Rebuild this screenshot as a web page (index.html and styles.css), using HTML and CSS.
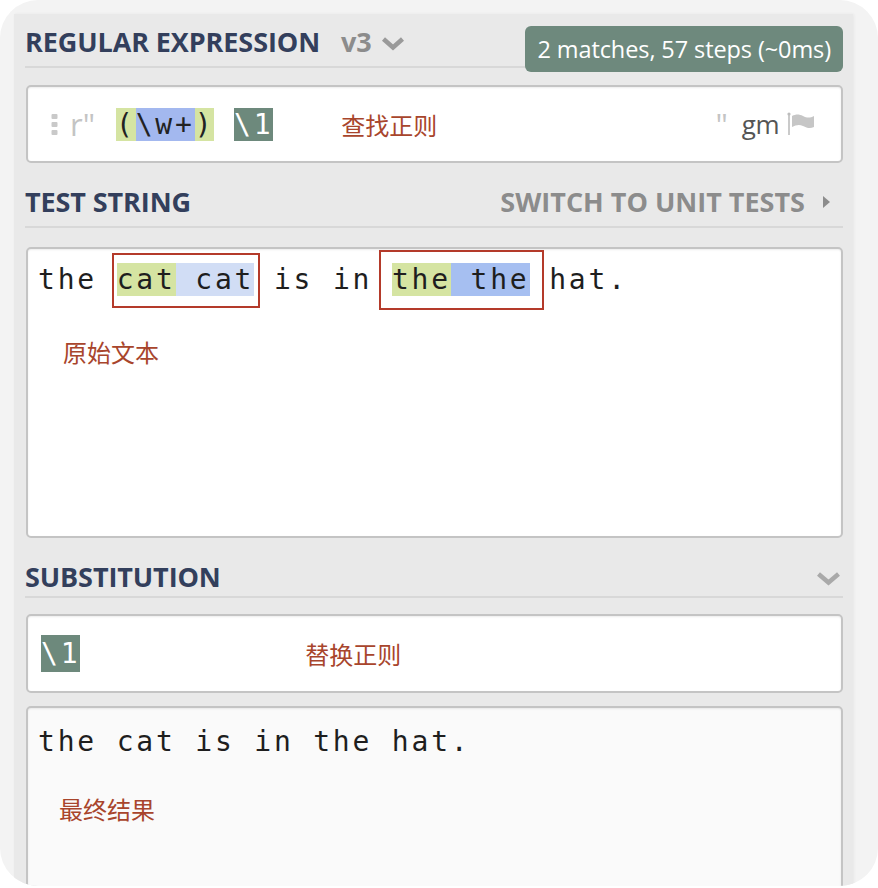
FILE: index.html
```html
<!DOCTYPE html>
<html lang="zh-CN">
<head>
<meta charset="utf-8">
<title>regex101</title>
<link rel="stylesheet" href="styles.css">
</head>
<body>
<div class="frame">
  <div class="panel">
    <div class="sec-head head-regex">
      <div class="title">REGULAR EXPRESSION <span class="flavor">v3</span><svg class="chev chev-flavor" width="24" height="15" viewBox="0 0 24 15"><polyline points="2.5,3 12,11.5 21.5,3" fill="none" stroke="#9a9a9a" stroke-width="4.5"/></svg></div>
      <div class="badge">2 matches, 57 steps (~0ms)</div>
    </div>

    <div class="box regex-box">
      <div class="regex-left">
        <svg class="handle" width="7" height="21" viewBox="0 0 7 21"><rect x="0.5" y="0" width="6" height="5" rx="1" fill="#c9c9c9"/><rect x="0.5" y="8" width="6" height="5" rx="1" fill="#c9c9c9"/><rect x="0.5" y="16" width="6" height="5" rx="1" fill="#c9c9c9"/></svg>
        <span class="delim">r"</span>
        <span class="mono code"><span class="hl-grp">(</span><span class="hl-esc">\w+</span><span class="hl-grp">)</span> <span class="backref">\1</span></span>
        <span class="note note-find">查找正则</span>
      </div>
      <div class="regex-right">
        <span class="delim delim-end">"</span><span class="flags">gm</span>
        <svg class="flag" width="28" height="24" viewBox="0 0 28 24"><circle cx="2" cy="2" r="1.6" fill="#bdbdbd"/><line x1="2" y1="2" x2="2" y2="23" stroke="#bdbdbd" stroke-width="1.6"/><path d="M5 4 C9 2 12 2 16 4 S23 6 27 4 L27 15 C23 17 20 16 16 14 S9 13 5 15 Z" fill="#c6c6c6"/></svg>
      </div>
    </div>

    <div class="sec-head head-test">
      <div class="title">TEST STRING</div>
      <div class="switch">SWITCH TO UNIT TESTS <svg class="tri" width="9" height="14" viewBox="0 0 9 14"><polygon points="1,1 8,7 1,13" fill="#8c8c8c"/></svg></div>
    </div>

    <div class="box test-box">
      <div class="mono test-line">the <span class="anno anno-1"><span class="hl-grp">cat</span><span class="hl-m1"> cat</span></span> is in <span class="anno anno-2"><span class="hl-grp">the</span><span class="hl-m2"> the</span></span> hat.</div>
      <div class="note note-orig">原始文本</div>
    </div>

    <div class="sec-head head-sub">
      <div class="title">SUBSTITUTION</div>
      <svg class="chev chev-sub" width="25" height="15" viewBox="0 0 25 15"><polyline points="2.5,3 12.5,11.5 22.5,3" fill="none" stroke="#a9a9a9" stroke-width="4.5"/></svg>
    </div>

    <div class="box sub-box">
      <span class="mono backref">\1</span>
      <span class="note note-sub">替换正则</span>
    </div>

    <div class="box result-box">
      <div class="mono result-line">the cat is in the hat.</div>
      <div class="note note-result">最终结果</div>
    </div>
  </div>
</div>
</body>
</html>
```

FILE: styles.css
```css
* { box-sizing: border-box; }

html, body {
  margin: 0;
  padding: 0;
  background: #ffffff;
}

body {
  font-family: "Open Sans", "Noto Sans", sans-serif;
}

.frame {
  width: 878px;
  height: 886px;
  border-radius: 38px;
  background: #f3f3f3;
  overflow: hidden;
  padding: 14px 25px 0 14px;
}

.panel {
  height: 100%;
  background: #e9e9e9;
  padding: 0 10px 0 12px;
  overflow: hidden;
  box-shadow: 1px 0 3px rgba(0,0,0,0.05);
}

/* section headers */
.sec-head {
  display: flex;
  justify-content: space-between;
  align-items: flex-end;
  border-bottom: 2px solid #d8d8d8;
  margin-left: -1px;
}

.head-regex { margin-top: 11px; }
.head-test { margin-top: 22px; }
.head-sub { margin-top: 22px; }
.head-sub .title { padding-bottom: 2px; }

.title {
  font-weight: 700;
  font-size: 27px;
  line-height: 34px;
  color: #333f5c;
  padding-bottom: 7px;
  letter-spacing: -0.1px;
  display: flex;
  align-items: center;
  white-space: pre;
}

.flavor {
  color: #8c8c8c;
  margin-left: 14px;
}

.chev-flavor { margin-left: 9px; margin-top: 2px; }

.badge {
  align-self: flex-end;
  margin-bottom: -6px;
  height: 46px;
  line-height: 46px;
  padding: 0 12px;
  background: #6e897d;
  color: #ffffff;
  font-size: 23.5px;
  border-radius: 6px;
  letter-spacing: -0.1px;
}

.switch {
  font-weight: 700;
  font-size: 27px;
  line-height: 34px;
  color: #8c8c8c;
  padding-bottom: 7px;
  padding-right: 12px;
  display: flex;
  align-items: center;
  gap: 10px;
  white-space: pre;
}

.chev-sub {
  margin-bottom: 10px;
  margin-right: 2px;
}

/* boxes */
.box {
  background: #ffffff;
  border: 2px solid #c4c4c4;
  border-radius: 5px;
  box-shadow: inset 0 1px 2px rgba(0,0,0,0.08);
}

.mono {
  font-family: "DejaVu Sans Mono", "Liberation Mono", monospace;
  font-size: 28px;
  letter-spacing: 2.8px;
  white-space: pre;
}

.note {
  font-family: "Noto Sans CJK SC", "Noto Sans", sans-serif;
  font-size: 24px;
  color: #a8452c;
}

/* regex box */
.regex-box {
  margin-top: 17px;
  height: 78px;
  display: flex;
  align-items: center;
  justify-content: space-between;
  padding: 0 26px 0 23px;
}

.regex-left, .regex-right {
  display: flex;
  align-items: center;
}

.handle { margin-right: 12px; margin-top: 1px; }

.delim {
  font-size: 31px;
  color: #c4c4c4;
  line-height: 37px;
}

.code {
  margin-left: 21px;
  line-height: 37px;
  color: #222222;
}

.hl-grp { background: #d5e4a2; }
.hl-esc { background: #a3b8ef; }
.hl-m1 { background: #d1ddf5; }
.hl-m2 { background: #a6bff1; }

.backref {
  background: #6d897c;
  color: #ffffff;
}

.note-find { margin-left: 68px; }

.delim-end { margin-right: 14px; }

.flags {
  font-size: 26px;
  color: #555555;
  line-height: 37px;
  margin-right: 8px;
  letter-spacing: -0.5px;
}

.flag { margin-top: -1px; }

/* test string */
.test-box {
  margin-top: 19px;
  height: 291px;
  padding: 9px 10px 0 10px;
}

.test-line {
  line-height: 44px;
  color: #1e1e1e;
}

.anno {
  display: inline-block;
  border: 2px solid #b43a2a;
}

.anno-1 {
  padding: 3px 4px 4px 3px;
  margin: -5px -6px -6px -5px;
}

.anno-2 {
  padding: 6px 12px 6px 11px;
  margin: -8px -14px -8px -13px;
}

.note-orig {
  margin-top: 36px;
  margin-left: 25px;
  line-height: 28px;
}

/* substitution */
.sub-box {
  margin-top: 16px;
  height: 79px;
  display: flex;
  align-items: center;
  padding-left: 13px;
}

.sub-box .backref {
  line-height: 37px;
}

.note-sub { margin-left: 225px; }

/* result */
.result-box {
  margin-top: 13px;
  height: 260px;
  background: #fafafa;
  padding: 12px 10px 0 10px;
}

.result-line {
  line-height: 44px;
  color: #1e1e1e;
}

.note-result {
  margin-top: 31px;
  margin-left: 21px;
  line-height: 28px;
}
```
